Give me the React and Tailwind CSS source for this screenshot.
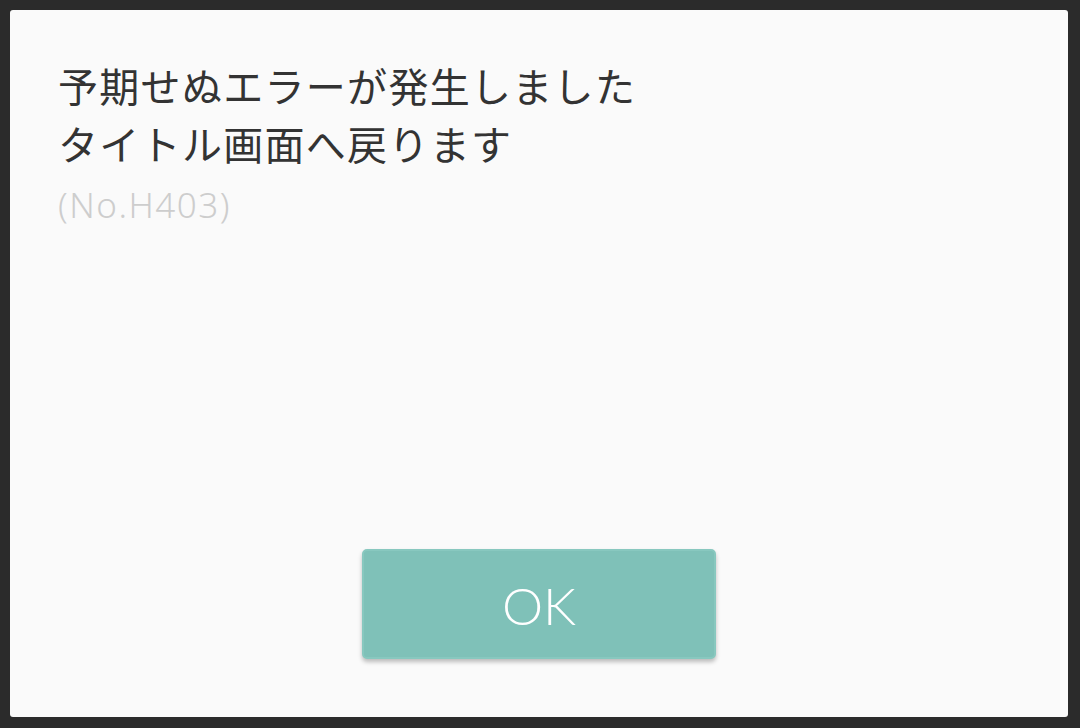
import React from 'react';

const App = () => {
  return (
    <div className="w-[1080px] h-[728px] bg-[#2b2b2b] p-[10px] pr-[12px] pb-[11px]">
      <div
        className="h-full bg-[#fafafa] rounded-[3px] flex flex-col px-[48px] pt-[46px] pb-[58px]"
        style={{ fontFamily: '"Noto Sans CJK JP", "Noto Sans", sans-serif' }}
      >
        <div className="text-[#333333] text-[40px] leading-[58px] tracking-[1.3px]">
          <p>予期せぬエラーが発生しました</p>
          <p>タイトル画面へ戻ります</p>
        </div>
        <p
          className="text-[#cdcdcd] text-[35px] leading-[40px] mt-[13px] font-light tracking-[1.5px]"
          style={{ fontFamily: '"Noto Sans", sans-serif' }}
        >
          (No.H403)
        </p>
        <div className="flex-1" />
        <div className="flex justify-center">
          <button
            className="w-[354px] h-[110px] bg-[#7fc1b8] rounded-[5px] shadow-[0_3px_4px_rgba(0,0,0,0.25)] border-2 border-[#88c8bf] text-white text-[52px] font-light pt-[2px]"
            style={{ fontFamily: 'Lato, "Open Sans", sans-serif' }}
          >
            OK
          </button>
        </div>
      </div>
    </div>
  );
};

export default App;
